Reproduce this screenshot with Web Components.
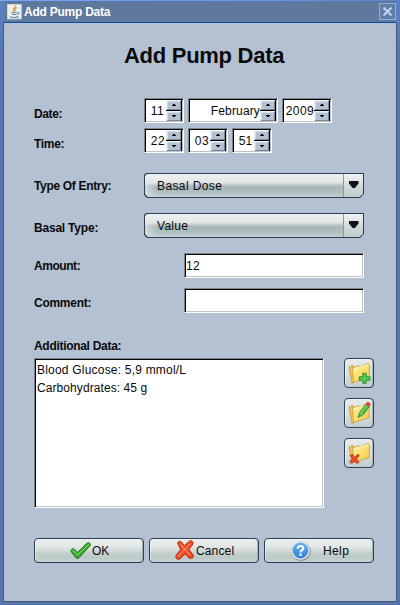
<!DOCTYPE html>
<html lang="en">
<head>
<meta charset="utf-8">
<title>Add Pump Data</title>
<style>
  html, body { margin: 0; height: 605px; overflow: hidden; }
  body { font: 12px/14px "Liberation Sans", Arial, sans-serif; color: #0a0a0a; }
  .head { display: flex; height: 75px; padding: 20px 0 0 120px; box-sizing: border-box; }
  .head fit-text { font: bold 22px/26px "Liberation Sans", Arial, sans-serif; }
  .col { display: flex; flex-direction: column; gap: 10px; padding-left: 20px; }
  .low { display: flex; }
  .actions { display: flex; gap: 5px; padding: 30px 0 0 30px; }
</style>
</head>
<body>
<dialog-window caption="Add Pump Data">
  <div class="head"><fit-text w="160">Add Pump Data</fit-text></div>
  <form-row label="Date:" w="28" drop="9" after="5">
    <spin-box w="40" tw="13" gap="2">11</spin-box><spin-box w="90" tw="49">February</spin-box><spin-box w="50" tw="28">2009</spin-box>
  </form-row>
  <form-row label="Time:" w="30" drop="9" after="20">
    <spin-box w="40" tw="14" gap="1">22</spin-box><spin-box w="40" tw="14" gap="1">03</spin-box><spin-box w="40" tw="13" gap="2">51</spin-box>
  </form-row>
  <form-row label="Type Of Entry:" w="77" drop="6" after="15"><combo-box tw="65">Basal Dose</combo-box></form-row>
  <form-row label="Basal Type:" w="64" drop="8" after="15"><combo-box tw="31">Value</combo-box></form-row>
  <form-row label="Amount:" w="46" drop="6" after="10" lead="150"><text-field tw="14">12</text-field></form-row>
  <form-row label="Comment:" w="57" drop="8" after="26" lead="150"><text-field></text-field></form-row>
  <form-row label="Additional Data:" w="87" drop="0" after="-1"></form-row>
  <div class="low">
    <list-box><fit-text w="149">Blood Glucose: 5,9 mmol/L</fit-text><fit-text w="110">Carbohydrates: 45 g</fit-text></list-box>
    <div class="col"><push-button w="30" h="30"><app-icon name="add"></app-icon></push-button><push-button w="30" h="30"><app-icon name="edit"></app-icon></push-button><push-button w="30" h="30"><app-icon name="remove"></app-icon></push-button></div>
  </div>
  <div class="actions">
    <push-button w="110" h="25" pad="34"><app-icon name="check"></app-icon><fit-text w="17">OK</fit-text></push-button>
    <push-button w="110" h="25" pad="24"><app-icon name="cross"></app-icon><fit-text w="38">Cancel</fit-text></push-button>
    <push-button w="110" h="25" pad="25"><app-icon name="help"></app-icon><fit-text w="26" style="margin-left:11px">Help</fit-text></push-button>
  </div>
</dialog-window>
<script>
class Base extends HTMLElement {
  connectedCallback() {
    if (this.shadowRoot) return;
    this.attachShadow({ mode: 'open' }).innerHTML = this.render();
    this.ready?.();
  }
  a(n, d = '') { return this.getAttribute(n) ?? d; }
}

/* Text spread by letter-spacing to a given width. */
customElements.define('fit-text', class extends Base {
  render() { return `<style>:host{display:block;white-space:nowrap;flex:none}span{display:inline-block}</style><span><slot></slot></span>`; }
  ready() {
    const s = this.shadowRoot.querySelector('span');
    const fit = () => {
      const n = this.textContent.length;
      if (!n || !this.a('w')) return;
      s.style.letterSpacing = '0px';
      const d = (+this.a('w') + 0.2 - s.getBoundingClientRect().width) / n;
      s.style.letterSpacing = d.toFixed(3) + 'px';
    };
    fit();
    queueMicrotask(fit);
    document.addEventListener('DOMContentLoaded', fit);
  }
});

customElements.define('dialog-window', class extends Base {
  render() { return `<style>
    :host{display:flex;flex-direction:column;box-sizing:border-box;width:400px;height:605px;padding:1px 4px 4px;
      background:linear-gradient(90deg,#76a7fa,#6696f0 60%,#5c82d0) 0 0/100% 1px no-repeat,linear-gradient(#5d80c4,#5877b0 50px,#5775ad)}
    header{display:flex;align-items:center;height:22px;flex:none;box-sizing:border-box;border-bottom:1px solid #0a4ea6;background:#5f789d;color:#fff;font-weight:bold;padding-left:3px}
    header fit-text{margin:0 auto 0 2px}
    header svg{display:block}
    main{flex:1;background:#b3c1d3;overflow:hidden;box-shadow:-1px 0 0 #44597c,1px 0 0 #405880,0 1px 0 #435675}
    </style><header>
    <svg width="15" height="16" viewBox="0 0 15 16"><rect width="15" height="15.500" fill="#b6bdc7"/><rect x=".5" y=".5" width="13.500" height="14" fill="#eceff0"/><path d="M8.300 1.500C9 4 4.600 4.600 7.200 7.600M9.600 3.500C7.500 5 7.300 5.800 8.400 7.300" fill="none" stroke="#e39a4c" stroke-width="1.300"/><path d="M4 8.800h6M5 10.500h4.500M2.700 12.800c2.500 1 7 .9 9-.2M10.300 8.600c2.300-.5 2 1.600.2 1.800" fill="none" stroke="#6787a4" stroke-width="1.100"/></svg>
    <fit-text w="86">${this.a('caption')}</fit-text>
    <svg width="17" height="17" viewBox="0 0 17 17"><rect x=".5" y=".5" width="16" height="16" fill="#647da5" stroke="#8fade0"/><path d="M4.500 4.500l8 8M12.500 4.500l-8 8" stroke="#bfd5fb" stroke-width="2"/></svg>
    </header><main><slot></slot></main>`; }
});

customElements.define('form-row', class extends Base {
  render() {
    const h = this.children.length ? 25 : 20;
    return `<style>:host{display:flex;height:${h}px;margin-bottom:${this.a('after')}px}
    .l{width:${this.a('lead', '110')}px;padding:${this.a('drop')}px 0 0 30px;font-weight:bold;flex:none}
    .c{display:flex;gap:4px}</style><div class="l"><fit-text w="${this.a('w')}">${this.a('label')}</fit-text></div><div class="c"><slot></slot></div>`; }
});

const SUNKEN = `box-sizing:border-box;background:#fff;border:1px solid;border-color:#7d8388 #fff #fff #7d8388;box-shadow:inset 1px 1px #000,inset -1px -1px #c2c2c2;`;

customElements.define('spin-box', class extends Base {
  render() {
    const b = d => `<svg width="15" height="10" viewBox="0 0 15 10" shape-rendering="crispEdges"><path fill="#b3c1d3" d="M0 0h15v10H0z"/><path fill="#e9f0f8" d="M0 0h15v1H0zM0 0h1v10H0z"/><path fill="#d0dcea" d="M1 1h13v1H1zM1 1h1v8H1z"/><path fill="#7c8796" d="M1 9h14v1H1zM14 1h1v9h-1z"/><path fill="#000" d="${d}"/></svg>`;
    return `<style>:host{display:flex;width:${this.a('w')}px;height:25px;padding:1px;${SUNKEN}}
    .t{flex:1;display:flex;justify-content:flex-end;padding:4px ${this.a('gap', 0)}px 0 0;min-width:0}
    .b{display:flex;flex-direction:column;gap:1px;padding:0 1px 0 0;width:15px;height:21px;background:#000;flex:none}
    svg{display:block;flex:none}</style>
    <div class="t"><fit-text w="${this.a('tw')}">${this.textContent.trim()}</fit-text></div><div class="b">${b('M7 4h2v1H7zM6 5h4v1H6z')}${b('M6 4h4v1H6zM7 5h2v1H7z')}</div>`; }
});

const GLOSS = 'linear-gradient(#e9eeed 0,#e3e9e8 30%,#d0d9d7 52%,#c3cfcd 62%,#bccac8 80%,#c6d2d0 100%)';

customElements.define('combo-box', class extends Base {
  render() { return `<style>:host{display:block;width:220px;height:25px}
    .o{height:100%;background:#2f3c56;padding:1px;box-sizing:border-box;clip-path:polygon(2px 0,100% 0,100% 21px,216px 100%,3px 100%,0 22px,0 2px)}
    .i{display:flex;height:100%;background:linear-gradient(90deg,#e8eeec99,#0000 12px),linear-gradient(#eff1f1 0,#e3e7e8 36%,#bdc8ca 48%,#a9b8bb 55%,#adbdbe 75%,#c1d0ce 100%);clip-path:polygon(2px 0,100% 0,100% 20px,214px 100%,3px 100%,0 20px,0 2px)}
    .t{flex:1;padding:5px 0 0 12px}.v{width:19px;border-left:1px solid #89989b;background:linear-gradient(#f2f4f4,#cdd6d6 60%,#c0cdcb)}svg{display:block;margin:7px 0 0 5px}</style>
    <div class="o"><div class="i"><div class="t"><fit-text w="${this.a('tw')}">${this.textContent}</fit-text></div><div class="v"><svg width="10" height="8"><path d="M0 0h9.500v2.500L6 7H3.500L0 2.500z" fill="#10121f"/></svg></div></div></div>`; }
});

customElements.define('text-field', class extends Base {
  render() { return `<style>:host{display:block;width:180px;height:25px;padding:5px 0 0 1px;${SUNKEN}}</style><fit-text w="${this.a('tw')}">${this.textContent}</fit-text>`; }
});

customElements.define('list-box', class extends Base {
  render() { return `<style>:host{display:flex;flex-direction:column;gap:4px;width:290px;height:150px;margin-left:30px;padding:4px 0 0 2px;${SUNKEN}}</style><slot></slot>`; }
});

customElements.define('push-button', class extends Base {
  render() {
    const sq = this.a('w') === '30';
    return `<style>:host{display:block;width:${this.a('w')}px;height:${this.a('h')}px}
    .o{height:100%;box-sizing:border-box;border:1px solid #2f3f52;border-radius:4px;background:${sq ? 'linear-gradient(#e6ebeb,#dae1e1 50%,#bfcccd)' : GLOSS};box-shadow:inset 1px 1px #f4f6f699,inset -1px 0 #a4b3b4;display:flex;align-items:center;${sq ? 'justify-content:center;padding-bottom:2px' : `padding-left:${this.a('pad', 0)}px`}}</style>
    <div class="o"><slot></slot></div>`; }
});

const folder = `<path d="M2 7l4-1.500 1 17-2 .5z" fill="#f3c649" stroke="#b98b2e" stroke-width=".7"/><path d="M5.500 8l6-2.500 1.500 1.500 8-4 1.500 1.500-.5 13-15.500 5z" fill="url(#f)" stroke="#c89d3c" stroke-width=".8"/><path d="M7 9.500l14-5" stroke="#fffbd0"/>`;
const icons = {
  add: [24, 24, folder + `<path d="M14.300 13.800h3.400v3.500h3.800v3.500h-3.800v3h-3.400v-3h-3.600v-3.500h3.600z" transform="translate(1.500 -.5)" fill="#54c94c" stroke="#25882b" stroke-width=".9"/>`],
  edit: [24, 24, folder + `<path d="M11 17.500l1.500-5L19 4l3.500 2.500L16 15z" fill="#55bd45" stroke="#2d832e" stroke-width=".8"/><path d="M12.500 12.500L16 15M14 12l6-7" stroke="#a0ea86" stroke-width=".8"/><path d="M18.500 4.500l1.200-2c1.500-1.500 4.500.5 3.800 2.300l-1.200 2z" fill="#dc4935"/>`],
  remove: [24, 24, folder + `<path d="M3 15.500l2.700-1 2 2.800 3-3.100 1.600 1.300-2.800 3.500 2.600 3.200-2.300 1.300-2.500-2.600-2.800 2.700-2-1.600 2.900-3.300z" fill="#ee4a27" stroke="#b52d19" stroke-width=".7"/>`],
  check: [23, 22, `<path d="M2.500 9.500C4 8 5 8.300 8.500 12.500L17.500 3.500C19.500 1.800 22 3.500 21.500 5.200L10 17.800C8.500 19 7.300 18.500 6.500 17.300L2 11.500z" fill="#36a52c" stroke="#28772a" stroke-width="1"/><path d="M3.500 10.200L8.500 15 20 4.300" stroke="#6acb50" stroke-width="1.300" fill="none"/>`],
  cross: [22, 23, `<path d="M3.500 4C5 1.500 7 2 8 3.500l2.500 3L15.500 2c2-1 4.500 1 3.500 3l-4 5.500 4.500 6c.5 2.500-2.500 4-4.500 2.500l-4-4-5 5c-2.500 1-5-.5-4-3.500l4.500-6z" fill="#ee4925" stroke="#b9341d" stroke-width="1"/><path d="M5.500 4.500l11 12M16.500 4.500L4 17.500" stroke="#ff7653" stroke-width="1.800"/>`],
  help: [22, 22, `<circle cx="11" cy="11.300" r="9.700" fill="#858b91"/><circle cx="10.500" cy="10.600" r="9.500" fill="#dce0e3"/><circle cx="10.500" cy="10.600" r="7.800" fill="url(#h)"/><path d="M7.700 8.700C7.700 5.200 13.300 5.200 13.300 8.300 13.300 10.300 10.500 10.200 10.500 12.500" fill="none" stroke="#fff" stroke-width="2.200"/><rect x="9.300" y="13.600" width="2.400" height="2.200" fill="#fff"/>`],
};

customElements.define('app-icon', class extends Base {
  render() {
    const [w, h, d] = icons[this.a('name')];
    return `<style>:host{display:block;flex:none}svg{display:block;overflow:visible}</style><svg width="${w}" height="${h}" viewBox="0 0 ${w} ${h}" fill="none"><defs><linearGradient id="f" x2="1" y2="1"><stop stop-color="#fff6a6"/><stop offset="1" stop-color="#f5c83f"/></linearGradient><linearGradient id="h" x2="0" y2="1"><stop stop-color="#62adf2"/><stop offset="1" stop-color="#3280d9"/></linearGradient></defs>${d}</svg>`; }
});
</script>
</body>
</html>
